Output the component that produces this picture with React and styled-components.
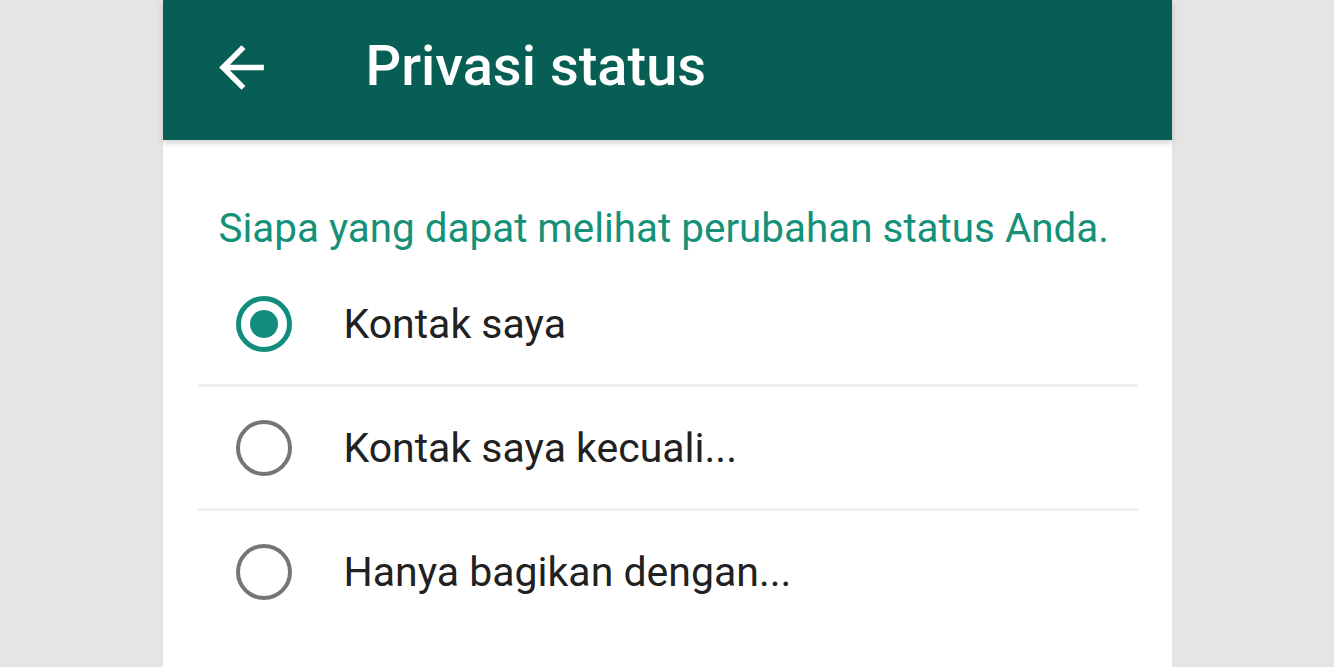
import React, { useState } from 'react';
import styled, { createGlobalStyle } from 'styled-components';

const GlobalStyle = createGlobalStyle`
    html, body {
        margin: 0;
        padding: 0;
        background: #e5e5e5;
        font-family: Roboto, "Noto Sans", sans-serif;
    }
`;

const Page = styled.div`
    display: flex;
    justify-content: center;
    height: 100vh;
    overflow: hidden;
    background: #e5e5e5;
`;

const Panel = styled.div`
    width: 1009px;
    background: #ffffff;
    display: flex;
    flex-direction: column;
`;

const Toolbar = styled.header`
    height: 140px;
    flex-shrink: 0;
    background: #075e54;
    display: flex;
    align-items: center;
    padding-left: 45px;
    box-shadow: 0 3px 6px rgba(0, 0, 0, 0.18);
    position: relative;
    z-index: 1;
`;

const BackButton = styled.button`
    width: 67px;
    height: 67px;
    padding: 0;
    border: none;
    background: none;
    display: flex;
    color: #ffffff;
    cursor: pointer;
    margin-top: -6px;
`;

const Title = styled.h1`
    margin: -8px 0 0 91px;
    font-size: 56px;
    font-weight: 500;
    line-height: 1;
    color: #ffffff;
`;

const Content = styled.div`
    padding: 68px 34px 0 35px;
`;

const SectionLabel = styled.p`
    margin: 0 0 13px 21px;
    font-size: 40.4px;
    line-height: 42px;
    color: #159079;
`;

const Row = styled.label`
    display: flex;
    align-items: center;
    height: 121px;
    padding-left: 38px;
    border-bottom: ${props => props.last ? 'none' : '3px solid #efefef'};
    cursor: pointer;
`;

const Radio = styled.span`
    box-sizing: border-box;
    width: 56px;
    height: 56px;
    border-radius: 50%;
    border: ${props => props.checked ? '5px solid #128c7e' : '4px solid #757575'};
    display: flex;
    align-items: center;
    justify-content: center;
    flex-shrink: 0;

    &::after {
        content: '';
        width: 28px;
        height: 28px;
        border-radius: 50%;
        background: #128c7e;
        display: ${props => props.checked ? 'block' : 'none'};
    }
`;

const RowText = styled.span`
    margin-left: 52px;
    font-size: 41px;
    color: #212121;
`;

const ArrowBack = () => (
    <svg width="67" height="67" viewBox="0 0 24 24" fill="currentColor">
        <path d="M20 11H7.83l5.59-5.59L12 4l-8 8 8 8 1.41-1.41L7.83 13H20v-2z" />
    </svg>
);

const options = ['Kontak saya', 'Kontak saya kecuali...', 'Hanya bagikan dengan...'];

export default function App() {
    const [selected, setSelected] = useState(0);
    return (
        <Page>
            <GlobalStyle />
            <Panel>
                <Toolbar>
                    <BackButton aria-label="Kembali"><ArrowBack /></BackButton>
                    <Title>Privasi status</Title>
                </Toolbar>
                <Content>
                    <SectionLabel>Siapa yang dapat melihat perubahan status Anda.</SectionLabel>
                    {options.map((opt, i) => (
                        <Row key={opt} last={i === options.length - 1} onClick={() => setSelected(i)}>
                            <Radio checked={selected === i} />
                            <RowText>{opt}</RowText>
                        </Row>
                    ))}
                </Content>
            </Panel>
        </Page>
    );
}
